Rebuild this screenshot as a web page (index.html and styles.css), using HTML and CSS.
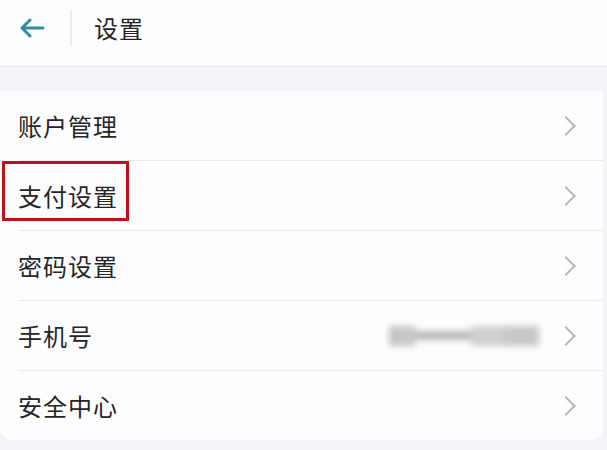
FILE: index.html
```html
<!DOCTYPE html>
<html lang="zh-CN">
<head>
<meta charset="utf-8">
<title>设置</title>
<link rel="stylesheet" href="styles.css">
</head>
<body>
<div class="page">
  <header class="topbar">
    <button class="back" aria-label="返回">
      <svg width="26" height="20" viewBox="0 0 26 20"><path d="M24 10H3M11 2L3 10l8 8" fill="none" stroke="#348aa3" stroke-width="3" stroke-linecap="round" stroke-linejoin="round"/></svg>
    </button>
    <span class="divider"></span>
    <h1 class="title">设置</h1>
  </header>
  <main class="list">
    <div class="row"><span class="label">账户管理</span><span class="chev"></span></div>
    <div class="row highlighted"><span class="label">支付设置</span><span class="chev"></span><span class="mark"></span></div>
    <div class="row"><span class="label">密码设置</span><span class="chev"></span></div>
    <div class="row"><span class="label">手机号</span><span class="value"><span class="blur b1"></span><span class="blur b2"></span><span class="blur b3"></span><span class="blur b4"></span></span><span class="chev"></span></div>
    <div class="row last"><span class="label">安全中心</span><span class="chev"></span></div>
  </main>
</div>
</body>
</html>
```
FILE: styles.css
```css
html, body {
  margin: 0;
  padding: 0;
  background: #f4f3f7;
  font-family: "Noto Sans CJK SC", "Noto Sans", sans-serif;
}
.page {
  width: 607px;
  height: 450px;
  overflow: hidden;
}
.topbar {
  height: 67px;
  background: #fdfdff;
  border-bottom: 1px solid #e6e5ea;
  display: flex;
  align-items: center;
  padding-bottom: 11px;
  box-sizing: border-box;
}
.back {
  border: 0;
  background: none;
  padding: 0;
  margin-left: 19px;
  width: 28px;
  height: 22px;
  display: flex;
  align-items: center;
}
.divider {
  width: 2px;
  height: 36px;
  background: #ececef;
  margin-left: 23px;
}
.title {
  margin: 0 0 0 22px;
  font-size: 24px;
  font-weight: normal;
  color: #262626;
  letter-spacing: 1px;
}
.list {
  margin-top: 24px;
  background: #fdfdff;
  border-radius: 0 0 12px 12px;
  margin-right: 4px;
}
.row {
  position: relative;
  height: 69px;
  display: flex;
  align-items: center;
  padding: 0 28px 0 18px;
  margin-bottom: 1px;
}
.row::after {
  content: "";
  position: absolute;
  left: 18px;
  right: 0;
  bottom: -1px;
  height: 1px;
  background: #ebeaee;
}
.row.last { margin-bottom: 0; }
.row.last::after { display: none; }
.label {
  flex: 1;
  font-size: 24px;
  color: #262626;
  letter-spacing: 1px;
}
.value {
  display: flex;
  align-items: center;
  margin-right: 20px;
  filter: blur(3px);
}
.blur { display: block; height: 20px; background: #cfcfd2; }
.b1 { width: 26px; background: #c6c6c9; }
.b2 { width: 56px; height: 9px; background: #b8b8bb; }
.b3 { width: 30px; background: #d0d0d3; }
.b4 { width: 38px; background: #c8c8cb; }
.chev {
  width: 12px;
  height: 12px;
  border-top: 2px solid #b9b9bd;
  border-right: 2px solid #b9b9bd;
  transform: rotate(45deg);
  margin-right: 2px;
}
.mark {
  position: absolute;
  left: 2px;
  top: 0;
  width: 127px;
  height: 60px;
  border: 3px solid #bf111b;
  box-sizing: border-box;
}
```
